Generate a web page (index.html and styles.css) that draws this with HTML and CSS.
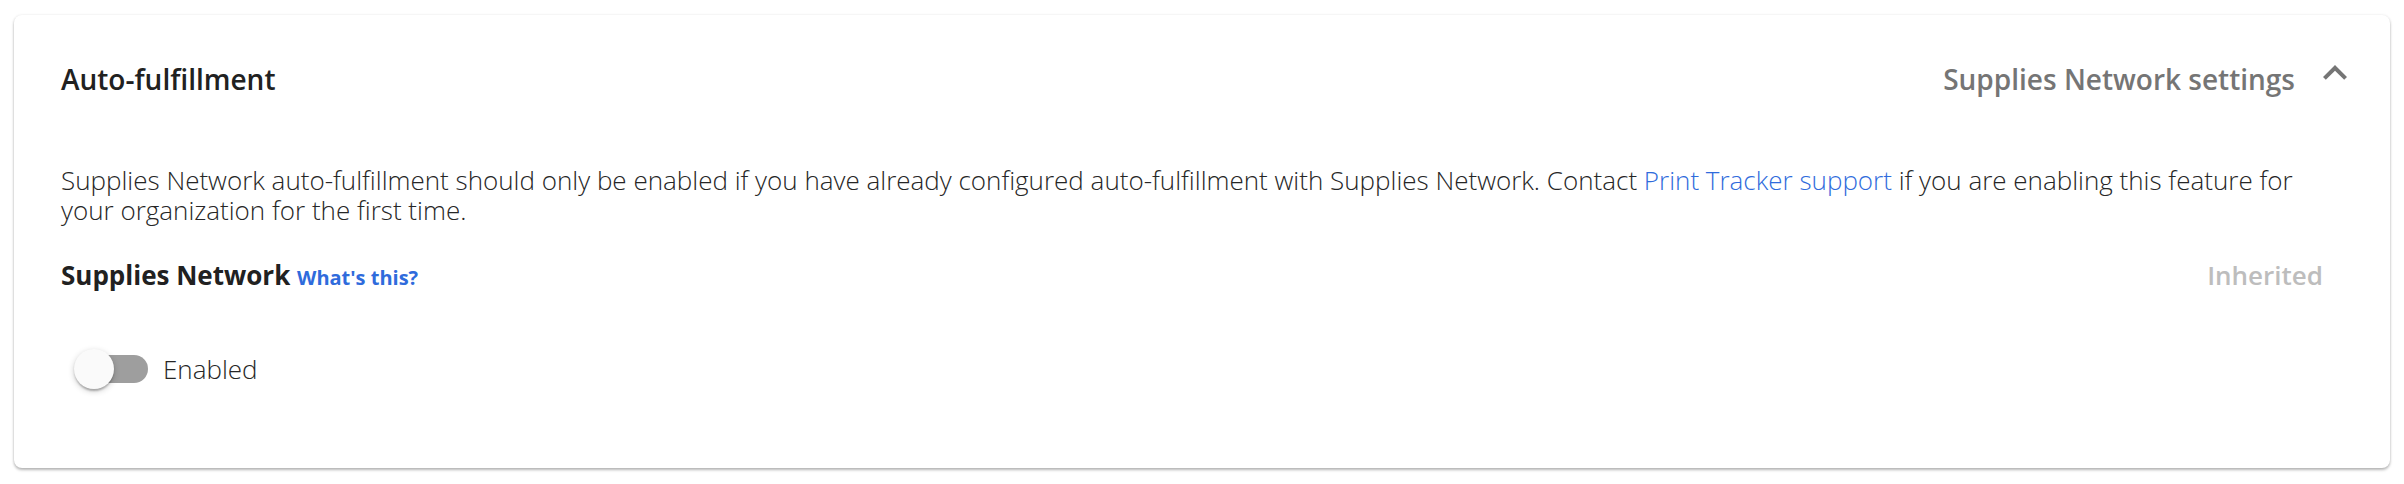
FILE: index.html
```html
<!DOCTYPE html>
<html lang="en">
<head>
<meta charset="utf-8">
<title>Auto-fulfillment</title>
<link rel="stylesheet" href="styles.css">
</head>
<body>
<section class="card">
  <header class="summary">
    <h2 class="title">Auto-fulfillment</h2>
    <div class="summary-right">
      <span class="settings">Supplies Network settings</span>
      <span class="expand">
        <svg viewBox="0 0 24 24" width="48" height="48" aria-hidden="true"><path d="M12 8l-6 6 1.41 1.41L12 10.83l4.59 4.58L18 14z" fill="#757575"/></svg>
      </span>
    </div>
  </header>
  <div class="details">
    <p class="desc">Supplies Network auto-fulfillment should only be enabled if you have already configured auto-fulfillment with Supplies Network. Contact <a class="link" href="#">Print Tracker support</a> if you are enabling this feature for your organization for the first time.</p>
    <div class="setting-row">
      <div class="setting-label">Supplies Network <a class="whats" href="#">What's this?</a></div>
      <div class="inherited">Inherited</div>
    </div>
    <label class="toggle-row">
      <span class="switch">
        <span class="track"></span>
        <span class="thumb"></span>
      </span>
      <span class="toggle-text">Enabled</span>
    </label>
  </div>
</section>
</body>
</html>
```

FILE: styles.css
```css
* { box-sizing: border-box; }
html, body { margin: 0; padding: 0; background: #ffffff; }
body {
  font-family: "Open Sans", "Liberation Sans", sans-serif;
  color: #212121;
  padding: 15px 14px;
}
.card {
  background: #ffffff;
  border-radius: 8px;
  box-shadow: 0 2px 3px rgba(0,0,0,0.28), 0 0 3px rgba(0,0,0,0.08);
  height: 453px;
}
.summary {
  height: 128px;
  display: flex;
  align-items: center;
  justify-content: space-between;
  padding: 0 31px 0 47px;
}
.title {
  margin: 0;
  font-size: 28px;
  font-weight: 600;
  color: #212121;
}
.summary-right {
  display: flex;
  align-items: center;
  gap: 16px;
}
.settings {
  font-size: 28px;
  font-weight: 600;
  color: #757575;
}
.expand {
  display: flex;
  width: 48px;
  height: 48px;
  margin-bottom: 12px;
}
.details {
  padding: 0 67px 0 47px;
}
.desc {
  margin: 22px 0 0;
  font-size: 26px;
  font-weight: 300;
  line-height: 30px;
  color: #262626;
}
.link { color: #2f6bdc; text-decoration: none; }
.setting-row {
  display: flex;
  justify-content: space-between;
  align-items: baseline;
  margin-top: 36px;
  line-height: 29px;
}
.setting-label {
  font-size: 26px;
  font-weight: 700;
  color: #212121;
}
.whats {
  font-size: 20px;
  font-weight: 700;
  color: #2f6bdc;
  text-decoration: none;
}
.inherited {
  font-size: 26px;
  font-weight: 600;
  color: #bdbdbd;
}
.toggle-row {
  display: flex;
  align-items: center;
  gap: 15px;
  margin-top: 57px;
  padding-left: 13px;
}
.switch {
  position: relative;
  display: block;
  width: 74px;
  height: 40px;
}
.track {
  display: block;
  margin: 6px 0 0 6px;
  width: 68px;
  height: 28px;
  border-radius: 14px;
  background: #9e9e9e;
}
.thumb {
  position: absolute;
  left: 0;
  top: 0;
  width: 40px;
  height: 40px;
  border-radius: 50%;
  background: #fafafa;
  box-shadow: 0 2px 6px rgba(0,0,0,0.2), 0 2px 2px rgba(0,0,0,0.14), 0 4px 2px -2px rgba(0,0,0,0.12);
}
.toggle-text {
  font-size: 26px;
  font-weight: 300;
  color: #262626;
}
```
